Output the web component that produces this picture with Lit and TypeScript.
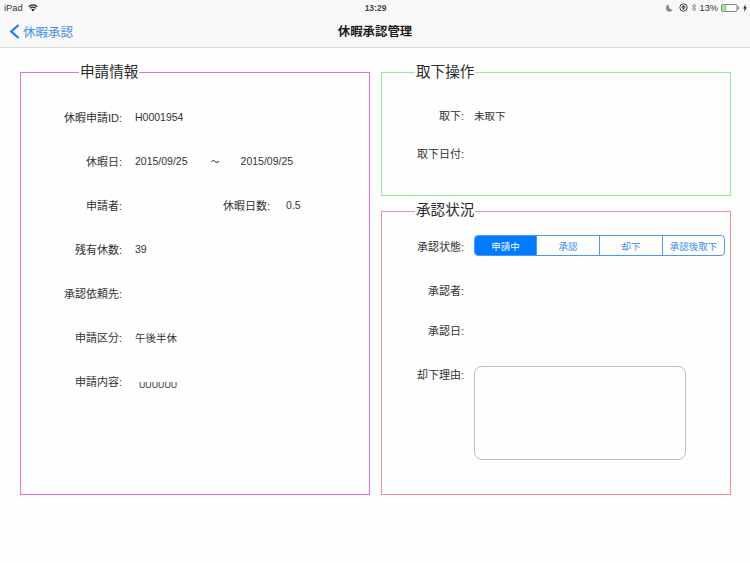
import { LitElement, html, css } from "lit";
import { customElement } from "lit/decorators.js";

const SEGMENTS = ["申請中", "承認", "却下", "承認後取下"];

@customElement("app-root")
export class AppRoot extends LitElement {
  static styles = css`
    :host {
      display: block;
      width: 750px;
      height: 563px;
      overflow: hidden;
      background: #fefefe;
      color: #333;
      font-family: "Liberation Sans", "Noto Sans CJK JP", sans-serif;
      font-size: 11px;
    }
    .head {
      height: 47px;
      background: #f8f8f8;
      border-bottom: 1px solid #dedede;
      box-sizing: content-box;
    }
    .status {
      height: 15px;
      display: grid;
      grid-template-columns: 1fr auto 1fr;
      align-items: center;
      padding: 0 3px 0 4px;
      font-size: 9.3px;
      color: #333;
    }
    .status-left {
      display: flex;
      align-items: center;
      gap: 5px;
    }
    .status-right {
      display: flex;
      align-items: center;
      justify-content: flex-end;
      gap: 3px;
    }
    .moon {
      margin-right: 3px;
    }
    .pct {
      font-size: 9.2px;
    }
    .time {
      font-size: 8.5px;
      font-weight: 700;
      color: #444;
    }
    .nav {
      height: 32px;
      display: grid;
      grid-template-columns: 1fr auto 1fr;
      align-items: center;
    }
    .back {
      display: flex;
      align-items: center;
      gap: 3px;
      padding-left: 9px;
      color: #3f8fe8;
      font-size: 12.5px;
    }
    .title {
      font-size: 12.4px;
      font-weight: 700;
      color: #1c1c1c;
    }
    .main {
      display: grid;
      grid-template-columns: 350px 350px;
      column-gap: 11px;
      padding: 24px 0 0 20px;
    }
    .box {
      position: relative;
      border: 1px solid;
      box-sizing: border-box;
    }
    .left {
      height: 423px;
      border-color: #e070e6;
      padding-top: 22px;
    }
    .right {
      display: flex;
      flex-direction: column;
      gap: 15px;
    }
    .cancel {
      height: 124px;
      border-color: #8eeea0;
      padding-top: 23px;
    }
    .approval {
      height: 284px;
      border-color: #f09090;
      padding-top: 23px;
    }
    .legend {
      position: absolute;
      top: -9px;
      background: #fefefe;
      padding: 0 1px;
      font-size: 14.6px;
      line-height: 17px;
      color: #2a2a2a;
    }
    .left .legend {
      left: 58px;
    }
    .right .legend {
      left: 33px;
    }
    .approval .legend {
      top: -10px;
    }
    .row {
      display: flex;
      align-items: center;
      height: 44px;
    }
    .label {
      width: 101px;
      text-align: right;
      flex-shrink: 0;
    }
    .value {
      margin-left: 13px;
      font-size: 10.5px;
    }
    .date {
      font-size: 10.5px;
    }
    .days-label {
      margin-left: 101px;
    }
    .days {
      margin-left: 16px;
    }
    .wave {
      margin: 0 21px 0 23px;
      font-size: 9px;
    }
    .memo {
      margin: 8px 0 0 17px;
      font-size: 8.8px;
    }
    .r .label {
      width: 82px;
    }
    .r .value {
      margin-left: 10px;
    }
    .cancel .row {
      height: 38px;
    }
    .approval .row.status-row {
      height: 21px;
    }
    .seg {
      margin-left: 10px;
      display: grid;
      grid-template-columns: 61px 63px 63px 1fr;
      width: 251px;
      height: 21px;
      box-sizing: border-box;
      border: 1px solid #4a9bf0;
      border-radius: 4px;
      overflow: hidden;
      color: #3f8fe8;
      font-size: 9.5px;
    }
    .seg div {
      display: flex;
      align-items: center;
      justify-content: center;
    }
    .seg div + div {
      border-left: 1px solid #4a9bf0;
    }
    .seg .on {
      background: #007aff;
      color: #fff;
    }
    .approval .row.plain {
      height: 40px;
    }
    .approval .gap {
      height: 14px;
    }
    .reason {
      display: flex;
      margin-top: 16px;
    }
    .area {
      margin-left: 10px;
      width: 212px;
      height: 94px;
      box-sizing: border-box;
      border: 1px solid #bdbdbd;
      border-radius: 8px;
    }
  `;

  render() {
    return html`
      <div class="head">
        <div class="status">
          <div class="status-left">
            <span>iPad</span>
            <svg width="10" height="8" viewBox="0 0 10 8">
              <path d="M5 7.6 3.2 5.6a2.5 2.5 0 0 1 3.6 0z" fill="#222" />
              <path d="M2.1 4.3a4.1 4.1 0 0 1 5.8 0M.7 2.7a6.1 6.1 0 0 1 8.6 0" fill="none" stroke="#222" stroke-width="1.2" />
            </svg>
          </div>
          <span class="time">13:29</span>
          <div class="status-right">
            <svg class="moon" width="7" height="8" viewBox="0 0 7 8">
              <path d="M3 .5a3.6 3.6 0 1 0 3.6 5A3.6 3.6 0 0 1 3 .5z" fill="#8a8a8a" />
            </svg>
            <svg width="9" height="9" viewBox="0 0 9 9">
              <circle cx="4.5" cy="4.5" r="3.7" fill="none" stroke="#444" stroke-width="1" />
              <path d="M4.5 2 7 4.5H2z" fill="#444" />
              <rect x="3.5" y="4.5" width="2" height="2" fill="#444" />
            </svg>
            <svg width="6" height="9" viewBox="0 0 6 9">
              <path d="M.8 2.4 4.8 6 3 8V1l1.8 2L.8 6.6" fill="none" stroke="#8a8a8a" stroke-width=".9" />
            </svg>
            <span class="pct">13%</span>
            <svg width="19" height="8" viewBox="0 0 19 8">
              <rect x=".5" y=".5" width="15.5" height="7" rx="1.5" fill="none" stroke="#666" stroke-width=".8" />
              <rect x="1.3" y="1.3" width="4" height="5.4" fill="#8fe08f" />
              <rect x="16.6" y="2.6" width="1.2" height="2.8" fill="#666" />
            </svg>
            <svg width="4" height="8" viewBox="0 0 4 8">
              <path d="M2.6 0 .2 4.5h1.4L1.2 8l2.6-4.8H2.3z" fill="#222" />
            </svg>
          </div>
        </div>
        <div class="nav">
          <div class="back">
            <svg width="11" height="15" viewBox="0 0 11 15">
              <path d="M9.6 1 2.2 7.5 9.6 14" fill="none" stroke="#1f7ee6" stroke-width="2.2" />
            </svg>
            <span>休暇承認</span>
          </div>
          <span class="title">休暇承認管理</span>
          <span></span>
        </div>
      </div>
      <div class="main">
        <section class="box left">
          <div class="legend">申請情報</div>
          <div class="row"><div class="label">休暇申請ID:</div><div class="value">H0001954</div></div>
          <div class="row">
            <div class="label">休暇日:</div>
            <div class="value">2015/09/25</div>
            <div class="wave">〜</div>
            <div class="date">2015/09/25</div>
          </div>
          <div class="row">
            <div class="label">申請者:</div>
            <div class="days-label">休暇日数:</div>
            <div class="value days">0.5</div>
          </div>
          <div class="row"><div class="label">残有休数:</div><div class="value">39</div></div>
          <div class="row"><div class="label">承認依頼先:</div></div>
          <div class="row"><div class="label">申請区分:</div><div class="value">午後半休</div></div>
          <div class="row"><div class="label">申請内容:</div><div class="memo">UUUUUU</div></div>
        </section>
        <div class="right">
          <section class="box cancel r">
            <div class="legend">取下操作</div>
            <div class="row"><div class="label">取下:</div><div class="value">未取下</div></div>
            <div class="row"><div class="label">取下日付:</div></div>
          </section>
          <section class="box approval r">
            <div class="legend">承認状況</div>
            <div class="row status-row">
              <div class="label">承認状態:</div>
              <div class="seg">
                ${SEGMENTS.map(
                  (s, i) => html`<div class=${i === 0 ? "on" : ""}>${s}</div>`
                )}
              </div>
            </div>
            <div class="gap"></div>
            <div class="row plain"><div class="label">承認者:</div></div>
            <div class="row plain"><div class="label">承認日:</div></div>
            <div class="reason">
              <div class="label">却下理由:</div>
              <div class="area"></div>
            </div>
          </section>
        </div>
      </div>
    `;
  }
}
